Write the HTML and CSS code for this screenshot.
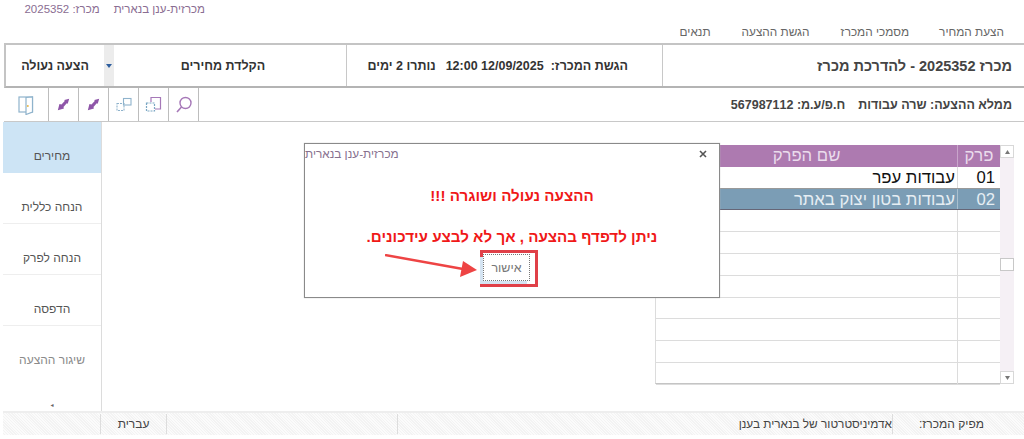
FILE: index.html
```html
<!DOCTYPE html>
<html lang="he" dir="rtl">
<head>
<meta charset="utf-8">
<title>מכרזית-ענן בנארית</title>
<link rel="stylesheet" href="styles.css">
</head>
<body>
<div class="page">
  <div class="apptitle"><span>מכרזית-ענן בנארית</span><span>מכרז: 2025352</span></div>
  <nav class="tabs">
    <span class="tab t1">הצעת המחיר</span>
    <span class="tab t2">מסמכי המכרז</span>
    <span class="tab t3">הגשת ההצעה</span>
    <span class="tab t4">תנאים</span>
  </nav>
  <header class="head">
    <div class="cell c-title">מכרז 2025352 - להדרכת מכרז</div>
    <div class="cell c-date"><span>הגשת המכרז:</span><span class="d-when" dir="ltr">12:00 12/09/2025</span><span>נותרו 2 ימים</span></div>
    <div class="cell c-mode">הקלדת מחירים</div>
    <div class="c-drop"><svg width="6" height="4" viewBox="0 0 6 4"><path d="M0 0h6L3 4z" fill="#2f5f9f"/></svg></div>
    <div class="c-lock">הצעה נעולה</div>
  </header>
  <div class="toolbar">
    <div class="filler"><span>ממלא ההצעה: שרה עבודות</span><span>ח.פ/ע.מ: 567987112</span></div>
    <div class="tool"><svg width="18" height="18" viewBox="0 0 18 18" fill="none"><circle cx="10.500" cy="7" r="5.500" stroke="#a678b8" stroke-width="1.400"/><path d="M6.500 11 2 16" stroke="#a678b8" stroke-width="1.600"/></svg></div>
    <div class="tool"><svg width="18" height="18" viewBox="0 0 18 18" fill="none"><path d="M6 6V1.500h9.500V13H10" stroke="#a678b8" stroke-width="1.200"/><rect x="1.500" y="7" width="8" height="8" stroke="#7ba7c4" stroke-width="1.200" stroke-dasharray="2 1"/></svg></div>
    <div class="tool"><svg width="18" height="18" viewBox="0 0 18 18" fill="none"><rect x="8.500" y="2.500" width="7.500" height="6.500" stroke="#8fb3cc" stroke-width="1.100"/><rect x="2" y="7.500" width="7" height="7" stroke="#8fb3cc" stroke-width="1.100" stroke-dasharray="2 1"/></svg></div>
    <div class="tool"><svg width="13" height="13" viewBox="0 0 16 16"><path d="M1 15 3 7.500 5.500 8 9.500 3.800 9 2.500 15 1 13.200 7 12 6.500 8 11 8.500 13z" fill="#8e55a8"/></svg></div>
    <div class="tool"><svg width="13" height="13" viewBox="0 0 16 16"><path d="M1 15 3 7.500 5.500 8 9.500 3.800 9 2.500 15 1 13.200 7 12 6.500 8 11 8.500 13z" fill="#8e55a8"/></svg></div>
    <div class="tool wide"><svg width="16" height="20" viewBox="0 0 16 20" fill="none"><rect x="1" y="2" width="13.500" height="15" stroke="#8fb3cc" stroke-width="1.200"/><path d="M8 2.500 14.500 2v15L8 19.500z" fill="#fff" stroke="#8fb3cc" stroke-width="1.200"/><circle cx="9.800" cy="11" r="1" fill="#e8b84a"/></svg></div>
  </div>
  <main class="main">
    <section class="content">
      <div class="gridwrap">
        <div class="scroll">
          <div class="sbtn"><svg width="5" height="4" viewBox="0 0 5 4"><path d="M0 4h5L2.500 0z" fill="#777"/></svg></div>
          <div class="thumb"></div>
          <div class="sbtn"><svg width="5" height="4" viewBox="0 0 5 4"><path d="M0 0h5L2.500 4z" fill="#777"/></svg></div>
        </div>
        <div class="grid">
          <div class="row hdr"><div class="code">פרק</div><div class="name">שם הפרק</div></div>
          <div class="row r1"><div class="code">01</div><div class="name">עבודות עפר</div></div>
          <div class="row sel"><div class="code">02</div><div class="name">עבודות בטון יצוק באתר</div></div>
          <div class="row"><div class="code"></div><div class="name"></div></div>
          <div class="row"><div class="code"></div><div class="name"></div></div>
          <div class="row"><div class="code"></div><div class="name"></div></div>
          <div class="row"><div class="code"></div><div class="name"></div></div>
          <div class="row"><div class="code"></div><div class="name"></div></div>
          <div class="row"><div class="code"></div><div class="name"></div></div>
          <div class="row"><div class="code"></div><div class="name"></div></div>
          <div class="row"><div class="code"></div><div class="name"></div></div>
        </div>
      </div>
    </section>
    <aside class="side">
      <div class="item active">מחירים</div>
      <div class="item">הנחה כללית</div>
      <div class="item">הנחה לפרק</div>
      <div class="item">הדפסה</div>
      <div class="item dim">שיגור ההצעה</div>
      <div class="more">◂</div>
    </aside>
  </main>
  <footer class="status">
    <span class="st-label">מפיק המכרז:</span>
    <span class="st-user">אדמיניסטרטור של בנארית בענן</span>
    <span class="st-gap"></span>
    <span class="st-lang">עברית</span>
    <span class="st-end"></span>
  </footer>
  <div class="dialog">
    <div class="dlg-head"><span class="dlg-title">מכרזית-ענן בנארית</span><svg class="dlg-x" width="8" height="8" viewBox="0 0 8 8"><path d="M1 1 7 7M7 1 1 7" stroke="#555" stroke-width="1.600"/></svg></div>
    <p class="msg m1">ההצעה נעולה ושוגרה !!!</p>
    <p class="msg m2">ניתן לדפדף בהצעה , אך לא לבצע עידכונים.</p>
    <div class="okbox"><button class="ok">אישור</button></div>
    <svg class="arrow" width="96" height="30" viewBox="0 0 96 30"><path d="M0 1 78 15" stroke="#ee4444" stroke-width="2.500"/><path d="M78 7 92 16 75 23z" fill="#ee4444"/></svg>
  </div>
</div>
</body>
</html>
```
FILE: styles.css
```css
* { box-sizing: border-box; }
html, body { margin: 0; padding: 0; background: #fff; }
body { font-family: "Liberation Sans", "DejaVu Sans", sans-serif; color: #333; overflow: hidden; }
.page { position: relative; width: 1024px; height: 439px; overflow: hidden; display: flex; flex-direction: column; }

.apptitle { height: 25px; padding-top: 3px; display: flex; gap: 14px; font-size: 11.500px; color: #8a6d92; width: 205px; margin-right: auto; white-space: nowrap; }
.tabs { height: 18px; display: flex; font-size: 11.800px; color: #666; white-space: nowrap; }
.tab { display: block; }
.t1 { margin-right: 20px; }
.t2 { margin-right: 30px; }
.t3 { margin-right: 31px; }
.t4 { margin-right: 31px; }

.head { margin-left: 4px; height: 45px; display: flex; border: 2px solid #c4c4c4; border-right: 0; border-bottom-color: #b4b4b4; font-weight: bold; }
.cell { display: flex; align-items: center; white-space: nowrap; border-left: 1px solid #c8c8c8; }
.c-title { width: 362px; padding-right: 12px; font-size: 14.500px; color: #444; }
.c-date { width: 316px; padding-right: 34px; font-size: 12.500px; color: #333; }
.d-when { margin: 0 7px 0 10px; }
.c-mode { width: 232px; justify-content: center; padding-right: 14px; font-size: 12.500px; color: #333; border-left: 0; }
.c-drop { width: 10px; background: #ececec; display: flex; align-items: center; justify-content: center; }
.c-lock { flex: 1; display: flex; align-items: center; justify-content: center; font-size: 12.500px; color: #333; }

.toolbar { margin-left: 4px; height: 34px; display: flex; border-bottom: 1px solid #c8c8c8; }
.filler { flex: 1; display: flex; align-items: center; gap: 13px; padding-right: 12px; font-size: 12.500px; font-weight: bold; color: #444; white-space: nowrap; }
.tool { width: 30px; display: flex; align-items: center; justify-content: center; border-right: 1px solid #bdbdbd; }
.tool.wide { width: 45px; }

.main { flex: 1; display: flex; min-height: 0; }
.content { flex: 1; }
.gridwrap { display: flex; margin: 23px 10px 0 0; height: 239px; }
.grid { width: 345px; border-left: 1px solid #dcdcdc; border-bottom: 1px solid #c4c4c4; }
.scroll { width: 14px; background: #f5f0f5; display: flex; flex-direction: column; }
.sbtn { height: 13px; border: 1px solid #d8d8d8; background: #fff; display: flex; align-items: center; justify-content: center; }
.thumb { height: 13px; border: 1px solid #c8c8c8; background: #fff; margin-top: 100px; margin-bottom: auto; }
.row { display: flex; height: 21.800px; border-bottom: 1px solid #dcdcdc; }
.row .code { width: 43px; border-left: 1px solid #dcdcdc; font-size: 16.700px; padding: 0 5px; text-align: right; line-height: 21px; }
.row .name { flex: 1; font-size: 16.700px; padding: 0 2px; text-align: right; line-height: 21px; white-space: nowrap; }
.hdr { background: #ad7ab0; border-bottom: 0; }
.hdr .code, .hdr .name { color: #eadcec; border-left-color: #c9a5cb; text-align: center; }
.r1 .code, .r1 .name { color: #111; }
.r1 { border-bottom-color: #999; }
.sel { background: #7b9db5; border-bottom: 1px solid #667; }
.sel .code, .sel .name { color: #e6eef3; border-left-color: #a9c0cf; }

.side { width: 99px; order: 1; border-right: 1px solid #dcdcdc; margin-left: 3px; display: flex; flex-direction: column; }
.item { height: 51px; display: flex; align-items: center; justify-content: center; padding-top: 17px; font-size: 12px; color: #555; border-bottom: 1px solid #eeeeee; }
.item.active { background: #cde4f5; border-bottom: 0; }
.item.dim { color: #8a8a8a; border-bottom: 0; }
.more { font-size: 6px; color: #666; text-align: center; margin-top: 24px; }

.status { height: 24px; margin-bottom: 4px; border-top: 2px solid #eeeeee; margin-left: 3px; display: flex; align-items: center; font-size: 12px; background: repeating-linear-gradient(45deg, #fbfbfb 0 1px, #f3f3f3 1px 2px); color: #444; white-space: nowrap; }
.st-label { width: 131px; padding-right: 40px; text-align: right; }
.st-user { flex: 1; border-right: 1px solid #ddd; line-height: 20px; font-size: 11.800px; }
.st-gap { width: 231px; border-right: 1px solid #ddd; height: 20px; }
.st-lang { width: 66px; text-align: center; border-right: 1px solid #ddd; line-height: 20px; }
.st-end { width: 98px; border-right: 1px solid #ddd; height: 20px; }

.dialog { position: absolute; left: 304px; top: 143px; width: 416px; height: 155px; background: #fff; border: 1px solid #8a8a8a; box-shadow: 0 0 1px #bbb; }
.dlg-head { display: flex; justify-content: space-between; align-items: center; padding: 3px 12px 0 0; font-size: 11.800px; color: #86708e; direction: ltr; }
.dlg-title { direction: rtl; }
.msg { margin: 0; text-align: center; color: #f01818; font-weight: bold; font-size: 15.200px; white-space: nowrap; position: absolute; left: 0; right: 0; }
.m1 { top: 43px; }
.m2 { top: 84px; }
.okbox { position: absolute; left: 175px; top: 106px; width: 58px; height: 37px; border: 3px solid #e04048; display: flex; align-items: flex-start; justify-content: flex-end; padding-top: 1px; }
.ok { width: 47px; height: 27px; margin: 0; background: #fff; border: 1px dotted #777; box-shadow: -3px 3px 0 #d5e4f2; font: 12.500px "Liberation Sans", sans-serif; color: #777; }
.arrow { position: absolute; left: 80px; top: 110px; }
```
